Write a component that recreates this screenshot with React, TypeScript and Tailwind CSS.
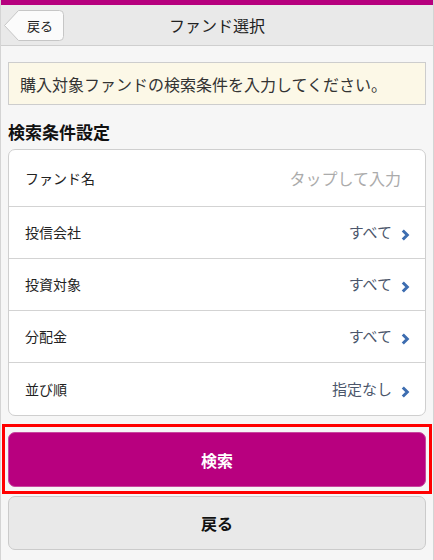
import React from "react";

const rows = [
  { label: "投信会社", value: "すべて" },
  { label: "投資対象", value: "すべて" },
  { label: "分配金", value: "すべて" },
  { label: "並び順", value: "指定なし" },
];

function Chevron() {
  return (
    <svg width="9" height="12" viewBox="0 0 9 12" className="ml-[9px] mt-[5px]">
      <path d="M1.8 1.5 L6.3 6 L1.8 10.5" fill="none" stroke="#3d6db0" strokeWidth="3" strokeLinejoin="miter" />
    </svg>
  );
}

function BackButton() {
  return (
    <button className="absolute left-[3px] top-[5px] w-[60px] h-[31px] flex items-center justify-end pr-[11px] text-[13px] text-[#222]">
      <svg width="60" height="31" viewBox="0 0 60 31" className="absolute left-0 top-0">
        <path d="M14.5 0.5 H55.5 Q59.5 0.5 59.5 4.5 V26.5 Q59.5 30.5 55.5 30.5 H14.5 L0.5 15.5 Z" fill="#fbfbfb" stroke="#c6c6c6" />
      </svg>
      <span className="relative">戻る</span>
    </button>
  );
}

export default function App() {
  return (
    <div
      className="w-[434px] min-h-[560px] bg-[#f6f6f6] border-x border-[#d4d4d4] text-[#222]"
      style={{ fontFamily: '"Noto Sans CJK JP", "Noto Sans", sans-serif' }}
    >
      <div className="h-[5px] bg-[#b6007e]" />
      <header className="relative h-[41px] bg-[#e9e9e9] border-b border-[#cfcfcf] flex items-center justify-center">
        <BackButton />
        <h1 className="text-[16px] text-[#222]">ファンド選択</h1>
      </header>

      <div className="px-[7px]">
        <div className="mt-[16px] h-[43px] bg-[#fcf8e7] border border-[#cdcdcd] flex items-center px-[11px] text-[16px] text-[#333]">
          購入対象ファンドの検索条件を入力してください。
        </div>

        <h2 className="mt-[15px] h-[24px] leading-[24px] text-[17px] font-bold text-[#111]">検索条件設定</h2>

        <div className="mt-[5px] bg-white border border-[#cfcfcf] rounded-[7px]">
          <div className="h-[57px] flex items-center justify-between pl-[16px] pr-[24px] border-b border-[#d3d3d3]">
            <span className="text-[14px]">ファンド名</span>
            <span className="text-[16px] text-[#ababab]">タップして入力</span>
          </div>
          {rows.map((r, i) => (
            <div
              key={r.label}
              className={
                "h-[52px] flex items-center justify-between pl-[16px] pr-[15px]" +
                (i < rows.length - 1 ? " border-b border-[#d3d3d3]" : "")
              }
            >
              <span className="text-[14px]">{r.label}</span>
              <span className="flex items-center text-[15px] text-[#4b566b]">
                {r.value}
                <Chevron />
              </span>
            </div>
          ))}
        </div>

        <div className="mt-[8px] -mx-[6px] border-[3px] border-[#ff0000] pt-[5px] pb-[4px] px-[3px]">
          <button className="w-full h-[55px] rounded-[7px] bg-[#b8007f] border border-[#c8479f] text-white text-[16px] font-bold">
            検索
          </button>
        </div>

        <button className="mt-[2px] w-full h-[54px] rounded-[7px] bg-[#e9e9e9] border border-[#cbcbcb] text-[16px] font-bold text-[#111]">
          戻る
        </button>
      </div>
    </div>
  );
}
